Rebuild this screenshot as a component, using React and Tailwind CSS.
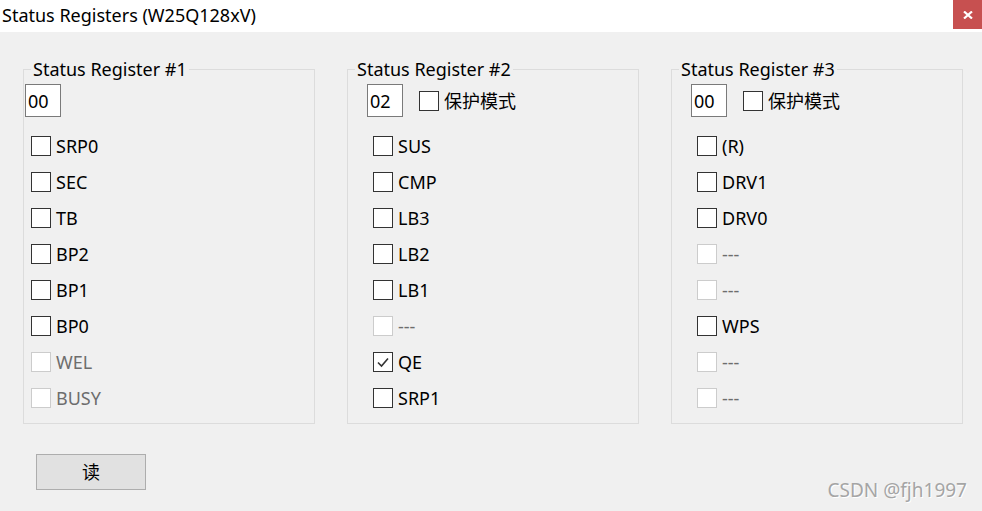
import React from "react";

const FONT = { fontFamily: '"Noto Sans", "Noto Sans CJK SC", sans-serif' };

function Box({ checked, disabled }) {
  return (
    <span
      className={`flex h-[20px] w-[20px] shrink-0 items-center justify-center border bg-white ${
        disabled ? "border-[#cccccc]" : "border-[#333333]"
      }`}
    >
      {checked && (
        <svg width="14" height="12" viewBox="0 0 14 12">
          <path d="M2 6.5 L5.5 10 L12 2.5" fill="none" stroke="#333" strokeWidth="1.6" />
        </svg>
      )}
    </span>
  );
}

function Row({ label, checked, disabled }) {
  return (
    <div className="flex h-[36px] items-center gap-[5px]">
      <Box checked={checked} disabled={disabled} />
      <span className={`text-[18px] leading-none ${disabled ? "text-[#6d6d6d]" : "text-black"}`}>
        {label}
      </span>
    </div>
  );
}

function Group({ title, value, protect, offset, rows, width }) {
  return (
    <fieldset className={`border border-[#dcdcdc] ${width} pb-[7px]`}>
      <legend className="ml-[7px] px-[2px] text-[18px] leading-[24px] text-black">{title}</legend>
      <div className={`flex items-center gap-[16px] pt-[3px] ${offset ? "pl-[19px]" : "pl-[1px]"}`}>
        <div className="flex h-[33px] w-[36px] items-center border border-[#7a7a7a] bg-white pl-[2px] text-[18px] leading-none">
          {value}
        </div>
        {protect && (
          <div className="flex items-center gap-[5px]">
            <Box />
            <span className="text-[18px] leading-none">保护模式</span>
          </div>
        )}
      </div>
      <div className={`mt-[11px] flex flex-col ${offset ? "pl-[25px]" : "pl-[7px]"}`}>
        {rows.map((r, i) => (
          <Row key={i} {...r} />
        ))}
      </div>
    </fieldset>
  );
}

export default function App() {
  const g1 = [
    { label: "SRP0" },
    { label: "SEC" },
    { label: "TB" },
    { label: "BP2" },
    { label: "BP1" },
    { label: "BP0" },
    { label: "WEL", disabled: true },
    { label: "BUSY", disabled: true },
  ];
  const g2 = [
    { label: "SUS" },
    { label: "CMP" },
    { label: "LB3" },
    { label: "LB2" },
    { label: "LB1" },
    { label: "---", disabled: true },
    { label: "QE", checked: true },
    { label: "SRP1" },
  ];
  const g3 = [
    { label: "(R)" },
    { label: "DRV1" },
    { label: "DRV0" },
    { label: "---", disabled: true },
    { label: "---", disabled: true },
    { label: "WPS" },
    { label: "---", disabled: true },
    { label: "---", disabled: true },
  ];
  return (
    <div className="flex h-[511px] w-[982px] flex-col overflow-hidden bg-[#f0f0f0] text-black" style={FONT}>
      <div className="flex h-[32px] shrink-0 items-start justify-between bg-white">
        <span className="pl-[2px] pt-[3px] text-[18px] leading-[24px]">Status Registers (W25Q128xV)</span>
        <div className="flex h-[29px] w-[29px] items-center justify-center bg-[#c75050]">
          <svg width="10" height="8" viewBox="0 0 10 8">
            <path d="M1 0.5 L9 7.5 M9 0.5 L1 7.5" stroke="#fff" strokeWidth="2.2" />
          </svg>
        </div>
      </div>
      <div className="flex gap-[32px] pl-[23px] pt-[25px]">
        <Group title="Status Register #1" value="00" rows={g1} width="w-[292px]" />
        <Group title="Status Register #2" value="02" protect offset rows={g2} width="w-[292px]" />
        <Group title="Status Register #3" value="00" protect offset rows={g3} width="w-[292px]" />
      </div>
      <div className="flex items-start justify-between pl-[36px] pr-[15px] pt-[30px]">
        <button className="flex h-[36px] w-[110px] items-center justify-center border border-[#adadad] bg-[#e1e1e1] text-[18px] leading-none">
          读
        </button>
        <span className="mt-[24px] text-[19px] leading-[24px] text-[#a5a5a5] [text-shadow:1px_1px_0_#ffffff]">
          CSDN @fjh1997
        </span>
      </div>
    </div>
  );
}
